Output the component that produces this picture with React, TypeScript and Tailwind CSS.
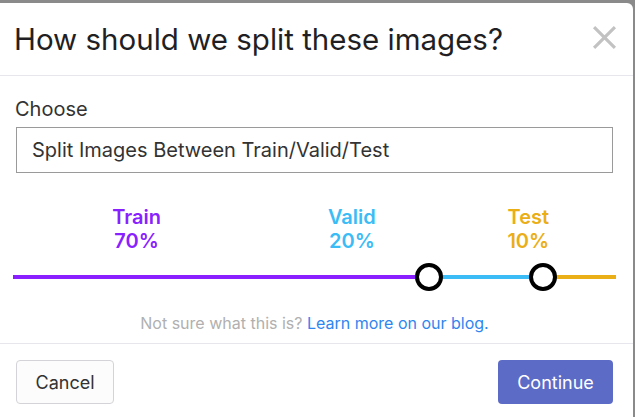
import React from "react";

export default function App() {
  const font = { fontFamily: "Inter, 'Noto Sans', sans-serif" };
  return (
    <div className="w-[635px] h-[417px] bg-[#8a8a8a] pt-[3px] overflow-hidden" style={font}>
      <div className="w-[633px] h-[414px] bg-white rounded-tr-[6px] flex flex-col">
        <div className="h-[73px] border-b border-[#e6e6ec] flex items-center justify-between pl-[14px] pr-[16px]">
          <h1 className="text-[29.5px] text-[#1f1f24] leading-none mt-[2px]">How should we split these images?</h1>
          <svg width="25" height="25" viewBox="0 0 24 24" className="text-[#c2c2c2] -mt-[4px]">
            <path d="M2 2 L22 22 M22 2 L2 22" stroke="currentColor" strokeWidth="3" />
          </svg>
        </div>
        <div className="flex-1 flex flex-col pl-[16px] pr-[20px] pt-[20px]">
          <div className="text-[20px] text-[#333] leading-[26px] -ml-[1px]">Choose</div>
          <div className="mt-[5px] h-[46px] border border-[#9a9a9a] flex items-center pl-[15px] text-[20px] text-[#333]">
            Split Images Between Train/Valid/Test
          </div>
          <div className="mt-[32px] -ml-[3px] flex font-semibold text-[20px] leading-[24px]">
            <div className="w-[248px] text-center text-[#8a1fff]">Train<br />70%</div>
            <div className="w-[184px] text-center text-[#3bbcf6]">Valid<br />20%</div>
            <div className="w-[170px] text-center text-[#eaae17]">Test<br />10%</div>
          </div>
          <div className="mt-[10px] -ml-[3px] w-[603px] h-[28px] flex items-center relative">
            <div className="h-[4px] w-[415px] bg-[#8a1fff]" />
            <div className="h-[4px] w-[115px] bg-[#3bbcf6]" />
            <div className="h-[4px] flex-1 bg-[#eaae17]" />
            <div className="absolute left-[402px] top-0 w-[28px] h-[28px] rounded-full border-[4px] border-black bg-white" />
            <div className="absolute left-[516px] top-0 w-[28px] h-[28px] rounded-full border-[4px] border-black bg-white" />
          </div>
          <div className="mt-[20px] text-center text-[16px] text-[#b0b0b0] -mr-[4px] -ml-[4px]">
            Not sure what this is? <span className="text-[#2e86f0]">Learn more on our blog.</span>
          </div>
        </div>
        <div className="h-[74px] border-t border-[#e6e6ec] flex items-start justify-between pl-[16px] pr-[20px] pt-[16px]">
          <button className="w-[98px] h-[44px] border border-[#d4d4d8] rounded-[4px] bg-[#fcfcfc] text-[18px] text-[#333]">Cancel</button>
          <button className="w-[115px] h-[44px] rounded-[4px] bg-[#5c6bc6] text-[18px] text-white">Continue</button>
        </div>
      </div>
    </div>
  );
}
